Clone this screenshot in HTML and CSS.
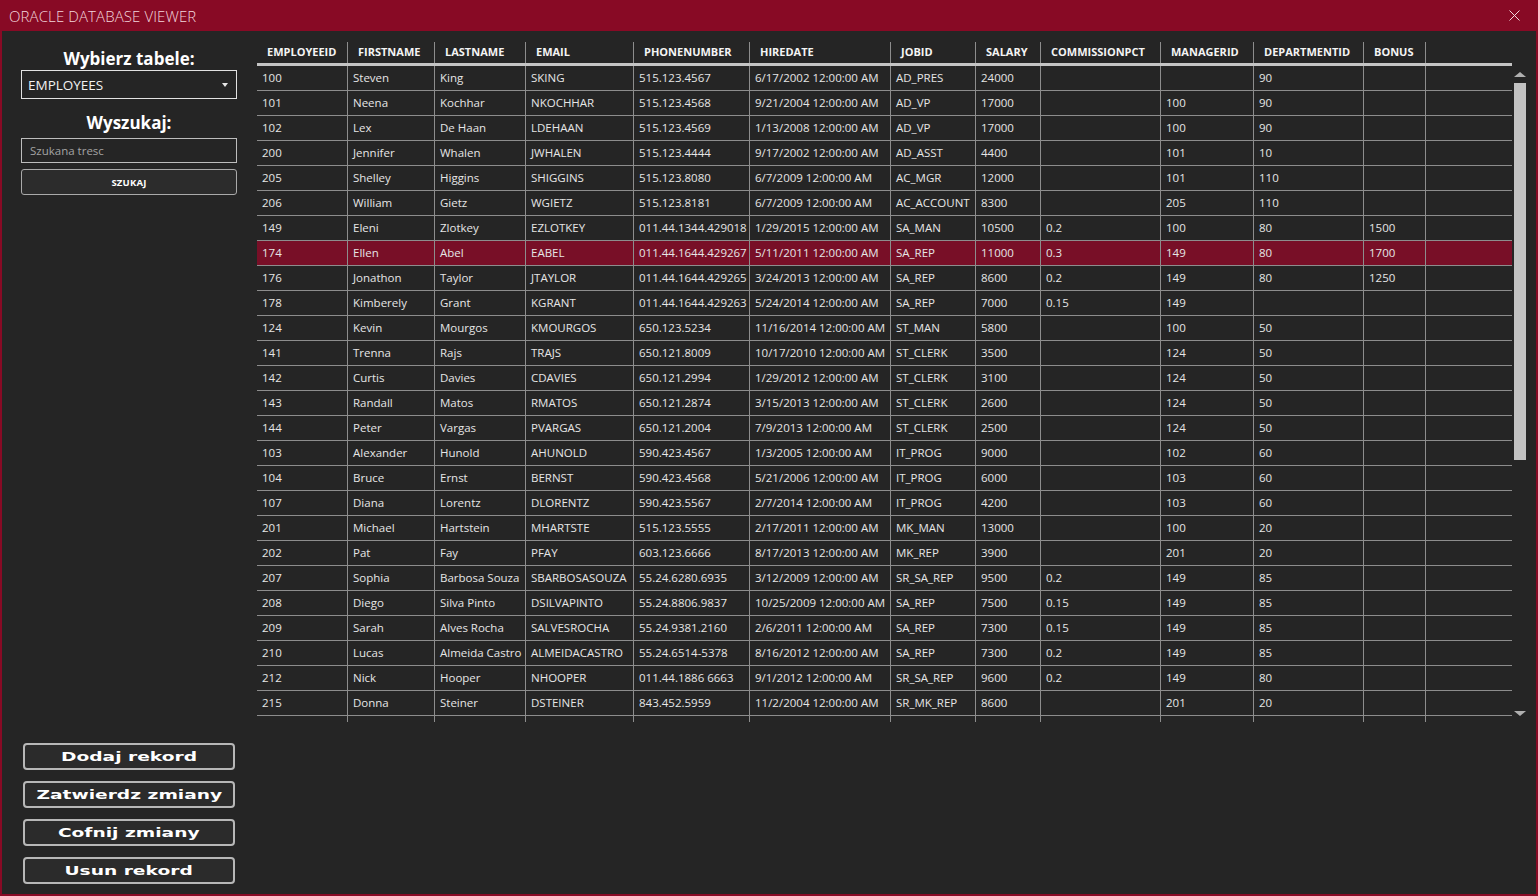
FILE: index.html
```html
<!DOCTYPE html>
<html lang="pl">
<head>
<meta charset="utf-8">
<title>Oracle Database Viewer</title>
<link rel="stylesheet" href="styles.css">
</head>
<body>
<div class="window">
  <div class="titlebar">
    <span class="title">ORACLE DATABASE VIEWER</span>
    <span class="close">
      <svg width="11" height="11" viewBox="0 0 11 11"><path d="M0.5 0.5 L10.5 10.5 M10.5 0.5 L0.5 10.5" stroke="#f3d6dc" stroke-width="1" fill="none"/></svg>
    </span>
  </div>
  <div class="content">
    <aside class="sidebar">
      <div class="label">Wybierz tabele:</div>
      <div class="combo"><span>EMPLOYEES</span><span class="caret"></span></div>
      <div class="label label-search">Wyszukaj:</div>
      <div class="textbox">Szukana tresc</div>
      <div class="search-btn">SZUKAJ</div>
      <div class="actions">
        <div class="action"><span class="action-label">Dodaj rekord</span></div>
        <div class="action"><span class="action-label">Zatwierdz zmiany</span></div>
        <div class="action"><span class="action-label">Cofnij zmiany</span></div>
        <div class="action"><span class="action-label">Usun rekord</span></div>
      </div>
    </aside>
    <main class="grid-area">
      <div class="grid">
        <div class="row head"><span>EMPLOYEEID</span><span>FIRSTNAME</span><span>LASTNAME</span><span>EMAIL</span><span>PHONENUMBER</span><span>HIREDATE</span><span>JOBID</span><span>SALARY</span><span>COMMISSIONPCT</span><span>MANAGERID</span><span>DEPARTMENTID</span><span>BONUS</span><span></span></div>
        <div class="row"><span>100</span><span>Steven</span><span>King</span><span>SKING</span><span>515.123.4567</span><span>6/17/2002 12:00:00 AM</span><span>AD_PRES</span><span>24000</span><span></span><span></span><span>90</span><span></span><span></span></div>
        <div class="row"><span>101</span><span>Neena</span><span>Kochhar</span><span>NKOCHHAR</span><span>515.123.4568</span><span>9/21/2004 12:00:00 AM</span><span>AD_VP</span><span>17000</span><span></span><span>100</span><span>90</span><span></span><span></span></div>
        <div class="row"><span>102</span><span>Lex</span><span>De Haan</span><span>LDEHAAN</span><span>515.123.4569</span><span>1/13/2008 12:00:00 AM</span><span>AD_VP</span><span>17000</span><span></span><span>100</span><span>90</span><span></span><span></span></div>
        <div class="row"><span>200</span><span>Jennifer</span><span>Whalen</span><span>JWHALEN</span><span>515.123.4444</span><span>9/17/2002 12:00:00 AM</span><span>AD_ASST</span><span>4400</span><span></span><span>101</span><span>10</span><span></span><span></span></div>
        <div class="row"><span>205</span><span>Shelley</span><span>Higgins</span><span>SHIGGINS</span><span>515.123.8080</span><span>6/7/2009 12:00:00 AM</span><span>AC_MGR</span><span>12000</span><span></span><span>101</span><span>110</span><span></span><span></span></div>
        <div class="row"><span>206</span><span>William</span><span>Gietz</span><span>WGIETZ</span><span>515.123.8181</span><span>6/7/2009 12:00:00 AM</span><span>AC_ACCOUNT</span><span>8300</span><span></span><span>205</span><span>110</span><span></span><span></span></div>
        <div class="row"><span>149</span><span>Eleni</span><span>Zlotkey</span><span>EZLOTKEY</span><span>011.44.1344.429018</span><span>1/29/2015 12:00:00 AM</span><span>SA_MAN</span><span>10500</span><span>0.2</span><span>100</span><span>80</span><span>1500</span><span></span></div>
        <div class="row selected"><span>174</span><span>Ellen</span><span>Abel</span><span>EABEL</span><span>011.44.1644.429267</span><span>5/11/2011 12:00:00 AM</span><span>SA_REP</span><span>11000</span><span>0.3</span><span>149</span><span>80</span><span>1700</span><span></span></div>
        <div class="row"><span>176</span><span>Jonathon</span><span>Taylor</span><span>JTAYLOR</span><span>011.44.1644.429265</span><span>3/24/2013 12:00:00 AM</span><span>SA_REP</span><span>8600</span><span>0.2</span><span>149</span><span>80</span><span>1250</span><span></span></div>
        <div class="row"><span>178</span><span>Kimberely</span><span>Grant</span><span>KGRANT</span><span>011.44.1644.429263</span><span>5/24/2014 12:00:00 AM</span><span>SA_REP</span><span>7000</span><span>0.15</span><span>149</span><span></span><span></span><span></span></div>
        <div class="row"><span>124</span><span>Kevin</span><span>Mourgos</span><span>KMOURGOS</span><span>650.123.5234</span><span>11/16/2014 12:00:00 AM</span><span>ST_MAN</span><span>5800</span><span></span><span>100</span><span>50</span><span></span><span></span></div>
        <div class="row"><span>141</span><span>Trenna</span><span>Rajs</span><span>TRAJS</span><span>650.121.8009</span><span>10/17/2010 12:00:00 AM</span><span>ST_CLERK</span><span>3500</span><span></span><span>124</span><span>50</span><span></span><span></span></div>
        <div class="row"><span>142</span><span>Curtis</span><span>Davies</span><span>CDAVIES</span><span>650.121.2994</span><span>1/29/2012 12:00:00 AM</span><span>ST_CLERK</span><span>3100</span><span></span><span>124</span><span>50</span><span></span><span></span></div>
        <div class="row"><span>143</span><span>Randall</span><span>Matos</span><span>RMATOS</span><span>650.121.2874</span><span>3/15/2013 12:00:00 AM</span><span>ST_CLERK</span><span>2600</span><span></span><span>124</span><span>50</span><span></span><span></span></div>
        <div class="row"><span>144</span><span>Peter</span><span>Vargas</span><span>PVARGAS</span><span>650.121.2004</span><span>7/9/2013 12:00:00 AM</span><span>ST_CLERK</span><span>2500</span><span></span><span>124</span><span>50</span><span></span><span></span></div>
        <div class="row"><span>103</span><span>Alexander</span><span>Hunold</span><span>AHUNOLD</span><span>590.423.4567</span><span>1/3/2005 12:00:00 AM</span><span>IT_PROG</span><span>9000</span><span></span><span>102</span><span>60</span><span></span><span></span></div>
        <div class="row"><span>104</span><span>Bruce</span><span>Ernst</span><span>BERNST</span><span>590.423.4568</span><span>5/21/2006 12:00:00 AM</span><span>IT_PROG</span><span>6000</span><span></span><span>103</span><span>60</span><span></span><span></span></div>
        <div class="row"><span>107</span><span>Diana</span><span>Lorentz</span><span>DLORENTZ</span><span>590.423.5567</span><span>2/7/2014 12:00:00 AM</span><span>IT_PROG</span><span>4200</span><span></span><span>103</span><span>60</span><span></span><span></span></div>
        <div class="row"><span>201</span><span>Michael</span><span>Hartstein</span><span>MHARTSTE</span><span>515.123.5555</span><span>2/17/2011 12:00:00 AM</span><span>MK_MAN</span><span>13000</span><span></span><span>100</span><span>20</span><span></span><span></span></div>
        <div class="row"><span>202</span><span>Pat</span><span>Fay</span><span>PFAY</span><span>603.123.6666</span><span>8/17/2013 12:00:00 AM</span><span>MK_REP</span><span>3900</span><span></span><span>201</span><span>20</span><span></span><span></span></div>
        <div class="row"><span>207</span><span>Sophia</span><span>Barbosa Souza</span><span>SBARBOSASOUZA</span><span>55.24.6280.6935</span><span>3/12/2009 12:00:00 AM</span><span>SR_SA_REP</span><span>9500</span><span>0.2</span><span>149</span><span>85</span><span></span><span></span></div>
        <div class="row"><span>208</span><span>Diego</span><span>Silva Pinto</span><span>DSILVAPINTO</span><span>55.24.8806.9837</span><span>10/25/2009 12:00:00 AM</span><span>SA_REP</span><span>7500</span><span>0.15</span><span>149</span><span>85</span><span></span><span></span></div>
        <div class="row"><span>209</span><span>Sarah</span><span>Alves Rocha</span><span>SALVESROCHA</span><span>55.24.9381.2160</span><span>2/6/2011 12:00:00 AM</span><span>SA_REP</span><span>7300</span><span>0.15</span><span>149</span><span>85</span><span></span><span></span></div>
        <div class="row"><span>210</span><span>Lucas</span><span>Almeida Castro</span><span>ALMEIDACASTRO</span><span>55.24.6514-5378</span><span>8/16/2012 12:00:00 AM</span><span>SA_REP</span><span>7300</span><span>0.2</span><span>149</span><span>85</span><span></span><span></span></div>
        <div class="row"><span>212</span><span>Nick</span><span>Hooper</span><span>NHOOPER</span><span>011.44.1886 6663</span><span>9/1/2012 12:00:00 AM</span><span>SR_SA_REP</span><span>9600</span><span>0.2</span><span>149</span><span>80</span><span></span><span></span></div>
        <div class="row"><span>215</span><span>Donna</span><span>Steiner</span><span>DSTEINER</span><span>843.452.5959</span><span>11/2/2004 12:00:00 AM</span><span>SR_MK_REP</span><span>8600</span><span></span><span>201</span><span>20</span><span></span><span></span></div>
        <div class="row tail"><span></span><span></span><span></span><span></span><span></span><span></span><span></span><span></span><span></span><span></span><span></span><span></span><span></span></div>
      </div>
      <div class="scrollbar">
        <span class="arrow-up"></span>
        <span class="thumb"></span>
        <span class="arrow-down"></span>
      </div>
    </main>
  </div>
</div>
</body>
</html>
```
FILE: styles.css
```css
* { box-sizing: border-box; margin: 0; padding: 0; }
html, body { width: 100%; height: 100%; }
body {
  margin: 0;
  background: #880a25;
  font-family: "Open Sans", "Noto Sans", sans-serif;
  overflow: hidden;
}
.window {
  width: 1538px;
  height: 896px;
  display: flex;
  flex-direction: column;
  background: #880a25;
  padding: 0 2px 2px 2px;
}
.titlebar {
  height: 31px;
  flex: none;
  display: flex;
  align-items: center;
  justify-content: space-between;
  padding-left: 7px;
  color: #f3d6dc;
}
.title {
  font-size: 15px;
  font-weight: 300;
  letter-spacing: 0.1px;
}
.close {
  width: 44px;
  height: 31px;
  display: flex;
  align-items: center;
  justify-content: center;
}
.content {
  flex: 1;
  background: #252525;
  display: flex;
  min-height: 0;
}
.sidebar {
  width: 255px;
  flex: none;
  display: flex;
  flex-direction: column;
  padding: 15px 20px 10px 19px;
}
.label {
  height: 24px;
  padding-top: 1px;
  line-height: 23px;
  text-align: center;
  color: #ffffff;
  font-weight: 700;
  font-size: 17px;
}
.label-search { margin-top: 11px; }
.combo {
  height: 29px;
  border: 1px solid #e2e2e2;
  display: flex;
  align-items: center;
  justify-content: space-between;
  padding: 0 8px 0 6px;
  color: #f2f2f2;
  font-size: 13.5px;
}
.caret {
  width: 0;
  height: 0;
  border-left: 3.5px solid transparent;
  border-right: 3.5px solid transparent;
  border-top: 4px solid #e6e6e6;
}
.textbox {
  margin-top: 4px;
  height: 25px;
  border: 1px solid #bdbdbd;
  color: #a3a3a3;
  font-size: 11.5px;
  line-height: 23px;
  padding-left: 8px;
}
.search-btn {
  margin-top: 6px;
  height: 26px;
  border: 1px solid #aaaaaa;
  border-radius: 3px;
  background: #2c2c2c;
  color: #ffffff;
  font-size: 9.5px;
  font-weight: 700;
  letter-spacing: 0.2px;
  display: flex;
  align-items: center;
  justify-content: center;
}
.actions {
  margin-top: auto;
  display: flex;
  flex-direction: column;
  gap: 11px;
  padding: 0 2px;
}
.action {
  height: 27px;
  border: 2px solid #b7b7b7;
  border-radius: 4px;
  background: #2b2b2b;
  display: flex;
  align-items: center;
  justify-content: center;
  color: #ffffff;
}
.action-label {
  display: inline-block;
  font-family: "DejaVu Sans", sans-serif;
  font-weight: 700;
  font-size: 11.5px;
  transform: scaleX(1.62);
}
.grid-area {
  flex: 1;
  display: flex;
  padding-top: 11px;
  align-items: flex-start;
}
.grid {
  width: 1255px;
  flex: none;
  color: #e6e6e6;
  font-size: 11.5px;
}
.row {
  display: grid;
  grid-template-columns: 91px 87px 91px 108px 116px 141px 85px 65px 120px 93px 110px 62px 86px;
  height: 25px;
  border-bottom: 1px solid #8d8d8d;
}
.row > span {
  border-right: 1px solid #8d8d8d;
  padding-left: 5px;
  white-space: nowrap;
  overflow: hidden;
  line-height: 24px;
}
.row > span:last-child { border-right: none; }
.row.head {
  height: 24px;
  border-bottom: 3px solid #c4c4c4;
  color: #f4f4f4;
  font-weight: 700;
  font-size: 11px;
}
.row.head > span {
  padding-left: 10px;
  line-height: 19px;
}
.row.selected { background: #780f27; }
.row.tail {
  height: 6px;
  border-bottom: none;
}
.scrollbar {
  margin-left: 2px;
  margin-top: 24px;
  width: 12px;
  height: 656px;
  display: flex;
  flex-direction: column;
  align-items: center;
  padding: 6px 0 6px;
}
.arrow-up {
  width: 0;
  height: 0;
  border-left: 6px solid transparent;
  border-right: 6px solid transparent;
  border-bottom: 5px solid #b0b0b0;
}
.thumb {
  margin-top: 6px;
  width: 12px;
  height: 377px;
  background: #c2c2c2;
}
.arrow-down {
  margin-top: auto;
  width: 0;
  height: 0;
  border-left: 6px solid transparent;
  border-right: 6px solid transparent;
  border-top: 5px solid #b0b0b0;
}
```
